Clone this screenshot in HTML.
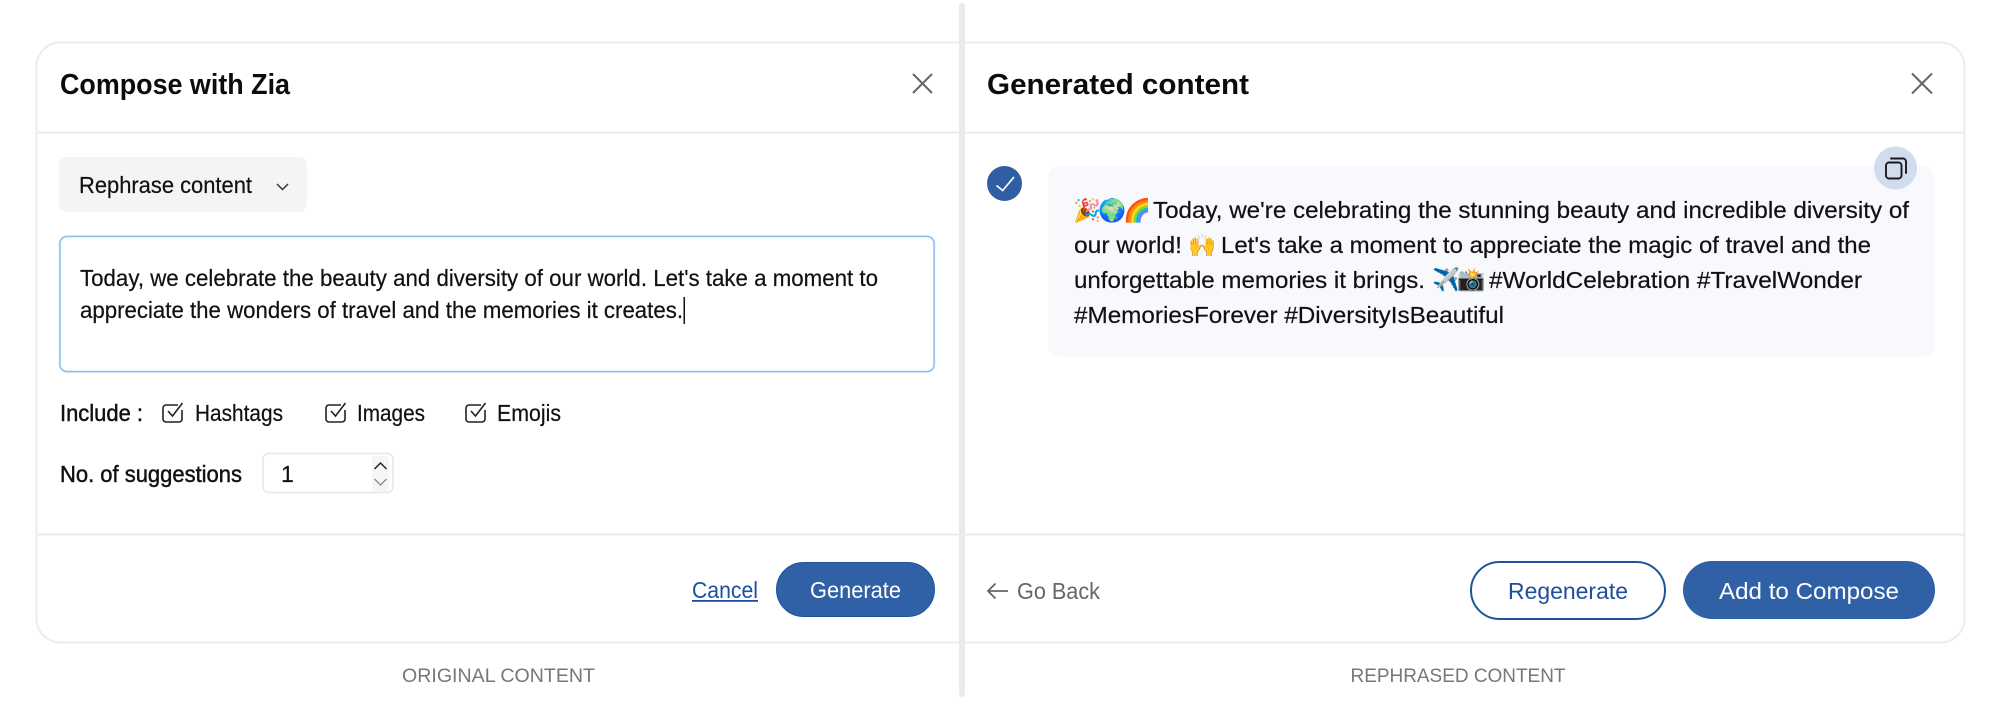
<!DOCTYPE html>
<html lang="en">
<head>
<meta charset="utf-8">
<title>Compose with Zia</title>
<style>
html,body{margin:0;padding:0;background:#fff;width:2000px;height:705px;overflow:hidden}
svg{display:block}
text{font-family:"Liberation Sans",sans-serif;fill:#111;font-size:23px}
.b{stroke:#111;stroke-width:.2px}
.t{font-size:29px;font-weight:700;fill:#0c0c0c}
.m{stroke:#111;stroke-width:.45px}
.cap{font-size:19.5px;fill:#777}
.e{font-family:"Noto Color Emoji","Liberation Sans",sans-serif;font-size:22.5px;letter-spacing:-3px}
</style>
</head>
<body>
<svg width="2000" height="705" viewBox="0 0 2000 705" xmlns="http://www.w3.org/2000/svg">
<!-- card -->
<rect x="36.500" y="42.500" width="1928" height="600" rx="24" fill="#fff" stroke="#ececec" stroke-width="2"/>
<line x1="37" y1="132.500" x2="1964" y2="132.500" stroke="#ebebeb" stroke-width="2"/>
<line x1="37" y1="534.500" x2="1964" y2="534.500" stroke="#ebebeb" stroke-width="2"/>
<rect x="959" y="3" width="6" height="694" rx="3" fill="#ebebeb"/>

<!-- left header -->
<text class="t" x="60" y="94" textLength="230" lengthAdjust="spacingAndGlyphs">Compose with Zia</text>
<path d="M913 74L932 93M932 74L913 93" stroke="#666" stroke-width="2" fill="none"/>

<!-- dropdown -->
<rect x="59" y="157" width="248" height="55" rx="8" fill="#f4f4f4"/>
<text class="b" x="79" y="193" textLength="173" lengthAdjust="spacingAndGlyphs">Rephrase content</text>
<path d="M277 184l5.500 5.500 5.500-5.500" stroke="#333" stroke-width="1.500" fill="none"/>

<!-- textarea -->
<rect x="60" y="236.500" width="874" height="135" rx="7" fill="#fff" stroke="#e3f1fc" stroke-width="3"/>
<rect x="60" y="236.500" width="874" height="135" rx="7" fill="#fff" stroke="#85c0f3" stroke-width="1.500"/>
<text class="b" x="80" y="286" textLength="798" lengthAdjust="spacingAndGlyphs">Today, we celebrate the beauty and diversity of our world. Let's take a moment to</text>
<text class="b" x="80" y="318" textLength="603" lengthAdjust="spacingAndGlyphs">appreciate the wonders of travel and the memories it creates.</text>
<rect x="683.500" y="297" width="1.500" height="27" fill="#111"/>

<!-- include -->
<text class="m" x="60" y="421" textLength="83" lengthAdjust="spacingAndGlyphs">Include :</text>
<g fill="none" stroke="#222" stroke-width="1.600">
<path d="M178 405h-12a3 3 0 0 0-3 3v11a3 3 0 0 0 3 3h13a3 3 0 0 0 3-3v-9"/><path d="M168 411l4.500 5 10-13"/>
<path d="M341 405h-12a3 3 0 0 0-3 3v11a3 3 0 0 0 3 3h13a3 3 0 0 0 3-3v-9"/><path d="M331 411l4.500 5 10-13"/>
<path d="M481 405h-12a3 3 0 0 0-3 3v11a3 3 0 0 0 3 3h13a3 3 0 0 0 3-3v-9"/><path d="M471 411l4.500 5 10-13"/>
</g>
<text class="b" x="195" y="421" textLength="88" lengthAdjust="spacingAndGlyphs">Hashtags</text>
<text class="b" x="357" y="421" textLength="68" lengthAdjust="spacingAndGlyphs">Images</text>
<text class="b" x="497" y="421" textLength="64" lengthAdjust="spacingAndGlyphs">Emojis</text>

<!-- suggestions -->
<text class="m" x="60" y="482" textLength="182" lengthAdjust="spacingAndGlyphs">No. of suggestions</text>
<rect x="263" y="453.500" width="130" height="39" rx="6" fill="#fff" stroke="#e6e6e6" stroke-width="1.500"/>
<text class="b" x="281" y="482">1</text>
<rect x="372" y="456" width="17" height="35" rx="3" fill="#f6f6f6"/>
<path d="M374.500 469l6-6 6 6" stroke="#222" stroke-width="1.500" fill="none"/>
<path d="M374.500 479l6 6 6-6" stroke="#888" stroke-width="1.300" fill="none"/>

<!-- left footer -->
<text x="692" y="598" textLength="66" lengthAdjust="spacingAndGlyphs" style="fill:#1d4f9e">Cancel</text>
<rect x="692" y="600" width="66" height="1.800" fill="#1d4f9e"/>
<rect x="776.500" y="562.500" width="158" height="54" rx="27" fill="#3060a6" stroke="#22549c"/>
<text x="810" y="598" textLength="91" lengthAdjust="spacingAndGlyphs" style="fill:#fff">Generate</text>

<text class="cap" x="402" y="682" textLength="193" lengthAdjust="spacingAndGlyphs">ORIGINAL CONTENT</text>

<!-- right header -->
<text class="t" x="987" y="94" textLength="262" lengthAdjust="spacingAndGlyphs">Generated content</text>
<path d="M1912 73.500L1932 93.500M1932 73.500L1912 93.500" stroke="#666" stroke-width="2" fill="none"/>

<!-- check -->
<circle cx="1004.500" cy="183.500" r="17.500" fill="#2f5ea5"/>
<path d="M996.500 185.500l6.200 5 11.300-13.500" stroke="#fff" stroke-width="1.700" fill="none"/>

<!-- content box -->
<rect x="1048" y="166" width="887" height="191" rx="12" fill="#f7f9fd"/>
<circle cx="1895.500" cy="168" r="21.500" fill="#d1dcee"/>
<path d="M1891 158.500h12a3 3 0 0 1 3 3v11.500" fill="none" stroke="#1a1a1a" stroke-width="1.900" stroke-linecap="round"/>
<rect x="1886" y="162.500" width="15.500" height="16" rx="3" fill="#d1dcee" stroke="#1a1a1a" stroke-width="1.900"/>

<text class="e" x="1073" y="218">🎉🌍🌈</text>
<text class="b" x="1153" y="218" textLength="756" lengthAdjust="spacingAndGlyphs">Today, we're celebrating the stunning beauty and incredible diversity of</text>
<text class="b" x="1074" y="253" textLength="108" lengthAdjust="spacingAndGlyphs">our world!</text>
<text class="e" x="1188" y="253">🙌</text>
<text class="b" x="1221" y="253" textLength="650" lengthAdjust="spacingAndGlyphs">Let's take a moment to appreciate the magic of travel and the</text>
<text class="b" x="1074" y="288" textLength="351" lengthAdjust="spacingAndGlyphs">unforgettable memories it brings.</text>
<text class="e" x="1432" y="287">✈️📸</text>
<text class="b" x="1489" y="288" textLength="373" lengthAdjust="spacingAndGlyphs">#WorldCelebration #TravelWonder</text>
<text class="b" x="1074" y="323" textLength="430" lengthAdjust="spacingAndGlyphs">#MemoriesForever #DiversityIsBeautiful</text>

<!-- right footer -->
<path d="M1008 591h-20M995.500 583.500L988 591l7.500 7.500" stroke="#666" stroke-width="1.800" fill="none"/>
<text x="1017" y="599" textLength="83" lengthAdjust="spacingAndGlyphs" style="fill:#666">Go Back</text>
<rect x="1471" y="562" width="194" height="57" rx="28.500" fill="#fff" stroke="#22549c" stroke-width="2"/>
<text x="1508" y="599" textLength="120" lengthAdjust="spacingAndGlyphs" style="fill:#1f4f9c;font-size:23.500px">Regenerate</text>
<rect x="1683" y="561" width="252" height="58" rx="29" fill="#3060a6"/>
<text x="1719" y="599" textLength="180" lengthAdjust="spacingAndGlyphs" style="fill:#fff;font-size:23.500px">Add to Compose</text>

<text class="cap" x="1350.500" y="682" textLength="215" lengthAdjust="spacingAndGlyphs">REPHRASED CONTENT</text>
</svg>
</body>
</html>
